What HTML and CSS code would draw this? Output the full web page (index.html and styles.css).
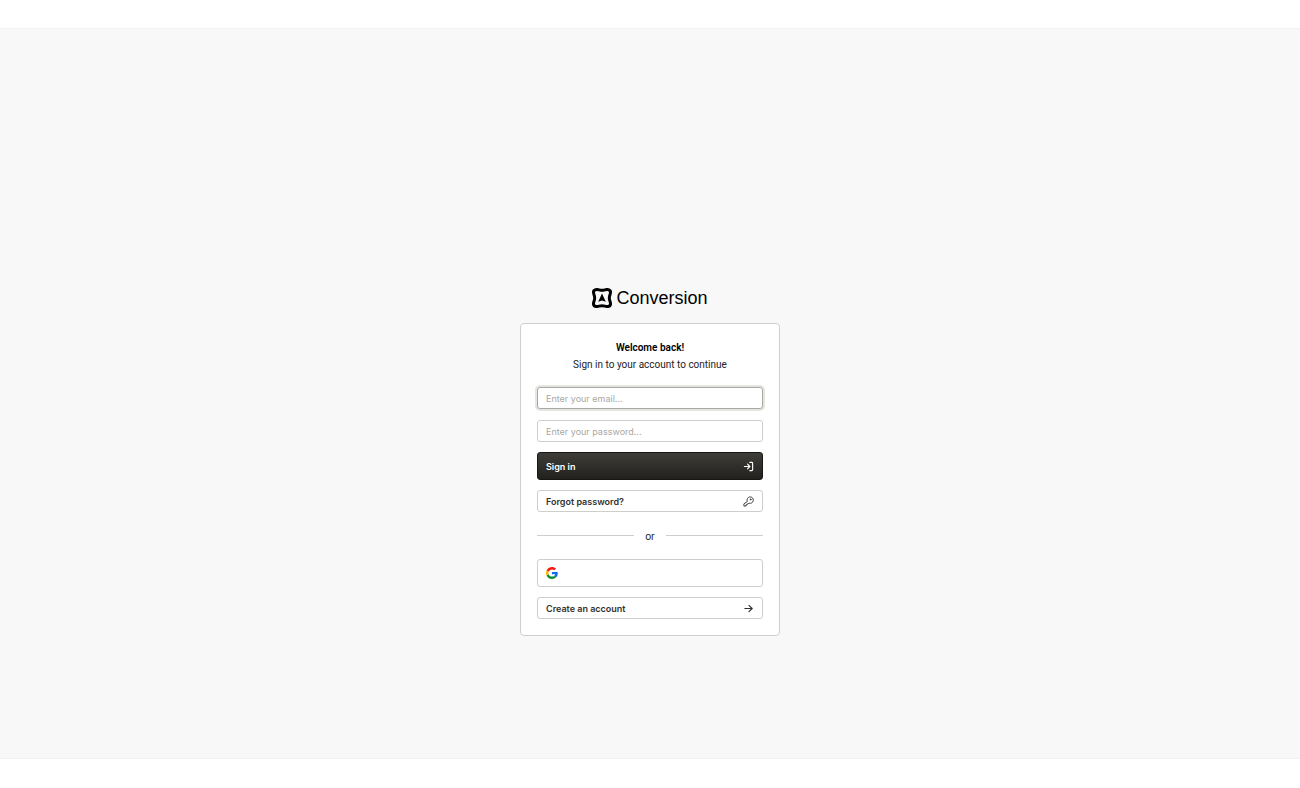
FILE: index.html
```html
<!DOCTYPE html>
<html lang="en">

<head>
    <meta charset="UTF-8">
    <meta name="viewport" content="width=device-width, initial-scale=1.0">
    <title>Sign in - Conversion</title>
    <link rel="stylesheet" href="styles.css">
</head>
<body>
    <main class="page">
        <div class="logo">
            <svg width="20" height="20" viewBox="0 0 20 20" aria-hidden="true">
                <path d="M4.500 1.500C6.500 1.300 7.500 2.300 10 2.300S13.500 1.300 15.500 1.500C17.700 1.700 18.600 2.800 18.500 4.500C18.400 6.200 17.300 7.600 17.300 10S18.400 13.800 18.500 15.500C18.600 17.200 17.700 18.300 15.500 18.500C13.500 18.700 12.500 17.700 10 17.700S6.500 18.700 4.500 18.500C2.300 18.300 1.400 17.200 1.500 15.500C1.600 13.800 2.700 12.400 2.700 10S1.600 6.200 1.500 4.500C1.400 2.800 2.300 1.700 4.500 1.500Z" fill="none" stroke="#000" stroke-width="3"/>
                <path d="M10 5.500L13.800 13.800L10 12.600L6.200 13.800Z" fill="#000"/>
            </svg>
            <span>Conversion</span>
        </div>

        <form class="card">
            <div class="intro">
                <h1>Welcome back!</h1>
                <p>Sign in to your account to continue</p>
            </div>

            <div class="fields">
                <input class="field focused" type="email" placeholder="Enter your email..." aria-label="Email">
                <input class="field" type="password" placeholder="Enter your password..." aria-label="Password">
            </div>

            <button class="btn btn-dark" type="submit">
                <span>Sign in</span>
                <svg class="icon" viewBox="0 0 24 24" aria-hidden="true">
                    <path d="M15 3h4a2 2 0 0 1 2 2v14a2 2 0 0 1-2 2h-4M3 12h12M10 7l5 5-5 5"/>
                </svg>
            </button>
            <button class="btn" type="button">
                <span>Forgot password?</span>
                <svg class="icon thin" viewBox="0 0 24 24" aria-hidden="true">
                    <path d="M9 11.500a7 7 0 1 1 4 4L11 17.500H8.500V20H6v2H2v-4z"/>
                    <circle cx="16.500" cy="7.500" r="1"/>
                </svg>
            </button>

            <div class="divider">or</div>

            <button class="btn btn-tall" type="button" aria-label="Sign in with Google">
                <svg class="google" viewBox="0 0 48 48" aria-hidden="true">
                    <path fill="#f21a0c" d="M24 9.500c3.540 0 6.710 1.220 9.210 3.600l6.850-6.850C35.900 2.380 30.470 0 24 0 14.620 0 6.510 5.380 2.560 13.220l7.980 6.190C12.430 13.720 17.740 9.500 24 9.500z"/>
                    <path fill="#1168f5" d="M46.980 24.550c0-1.570-.15-3.090-.38-4.550H24v9.020h12.940c-.58 2.960-2.260 5.480-4.780 7.180l7.730 6c4.510-4.180 7.090-10.360 7.090-17.650z"/>
                    <path fill="#fbb800" d="M10.530 28.590c-.48-1.450-.76-2.990-.76-4.590s.27-3.140.76-4.590l-7.980-6.190C.92 16.460 0 20.120 0 24c0 3.880.92 7.540 2.560 10.780l7.970-6.190z"/>
                    <path fill="#0b8a2c" d="M24 48c6.480 0 11.930-2.130 15.890-5.810l-7.730-6c-2.150 1.450-4.920 2.300-8.160 2.300-6.260 0-11.570-4.220-13.470-9.910l-7.980 6.190C6.510 42.620 14.620 48 24 48z"/>
                </svg>
            </button>
            <button class="btn" type="button">
                <span>Create an account</span>
                <svg class="icon" viewBox="0 0 24 24" aria-hidden="true">
                    <path d="M4 12h16M13 5l7 7-7 7"/>
                </svg>
            </button>
        </form>
    </main>
</body>
</html>
```

FILE: styles.css
```css
*{
    margin: 0;
    padding: 0;
    box-sizing: border-box;
}
body{
    padding: 28px 0 29px;
    background: #ffffff;
    color: #22211e;
    font-family: Inter, "Liberation Sans", sans-serif;
    font-size: 10px;
}
.page{
    display: flex;
    flex-direction: column;
    align-items: center;
    gap: 14px;
    min-height: calc(100vh - 57px);
    padding: 258px 16px 16px;
    background: #f8f8f8;
    border-top: 1px solid #f2f2f2;
    border-bottom: 1px solid #f2f2f2;
}

.logo{
    display: flex;
    align-items: center;
    gap: 4px;
    color: #000000;
    font-family: "Liberation Sans", Arial, sans-serif;
    font-size: 18px;
    line-height: 22px;
}

.card{
    display: flex;
    flex-direction: column;
    gap: 10px;
    width: 100%;
    max-width: 260px;
    padding: 15px 16px 16px;
    background: #ffffff;
    border: 1px solid #cfcfcd;
    border-radius: 4px;
}
.intro{
    margin-bottom: 4px;
    font-family: Roboto, sans-serif;
    line-height: 17px;
    text-align: center;
}
.intro h1{
    color: #000000;
    font-size: 10px;
    font-weight: 600;
}

.fields{
    display: flex;
    flex-direction: column;
    gap: 11px;
}
.field{
    width: 100%;
    height: 22px;
    padding: 0 8px;
    background: #ffffff;
    border: 1px solid #cfcecb;
    border-radius: 3px;
    outline: none;
    font-family: inherit;
    font-size: 9px;
}
.field::placeholder{
    color: #a9a8a2;
}
.focused{
    border-color: #a9a8a2;
    box-shadow: 0 0 0 2px #e6e5e2;
}

.btn{
    display: flex;
    align-items: center;
    justify-content: space-between;
    width: 100%;
    height: 22px;
    padding: 0 8px;
    background: #ffffff;
    border: 1px solid #cfcecb;
    border-radius: 3px;
    color: #33322e;
    font-family: inherit;
    font-size: 9px;
    font-weight: 600;
    cursor: pointer;
}
.btn-dark{
    height: 28px;
    background: linear-gradient(#3e3d38, #22211e);
    border-color: #181715;
    color: #ffffff;
}
.btn-tall{
    height: 28px;
}
.icon{
    width: 11px;
    height: 11px;
    fill: none;
    stroke: currentColor;
    stroke-width: 2.5;
    stroke-linecap: round;
    stroke-linejoin: round;
}
.thin{
    stroke-width: 2;
}
.google{
    width: 12px;
    height: 12px;
}

.divider{
    display: flex;
    align-items: center;
    gap: 11px;
    height: 27px;
    line-height: 16px;
}
.divider::before,
.divider::after{
    content: "";
    flex: 1;
    height: 1px;
    background: #cfcecb;
}
```
